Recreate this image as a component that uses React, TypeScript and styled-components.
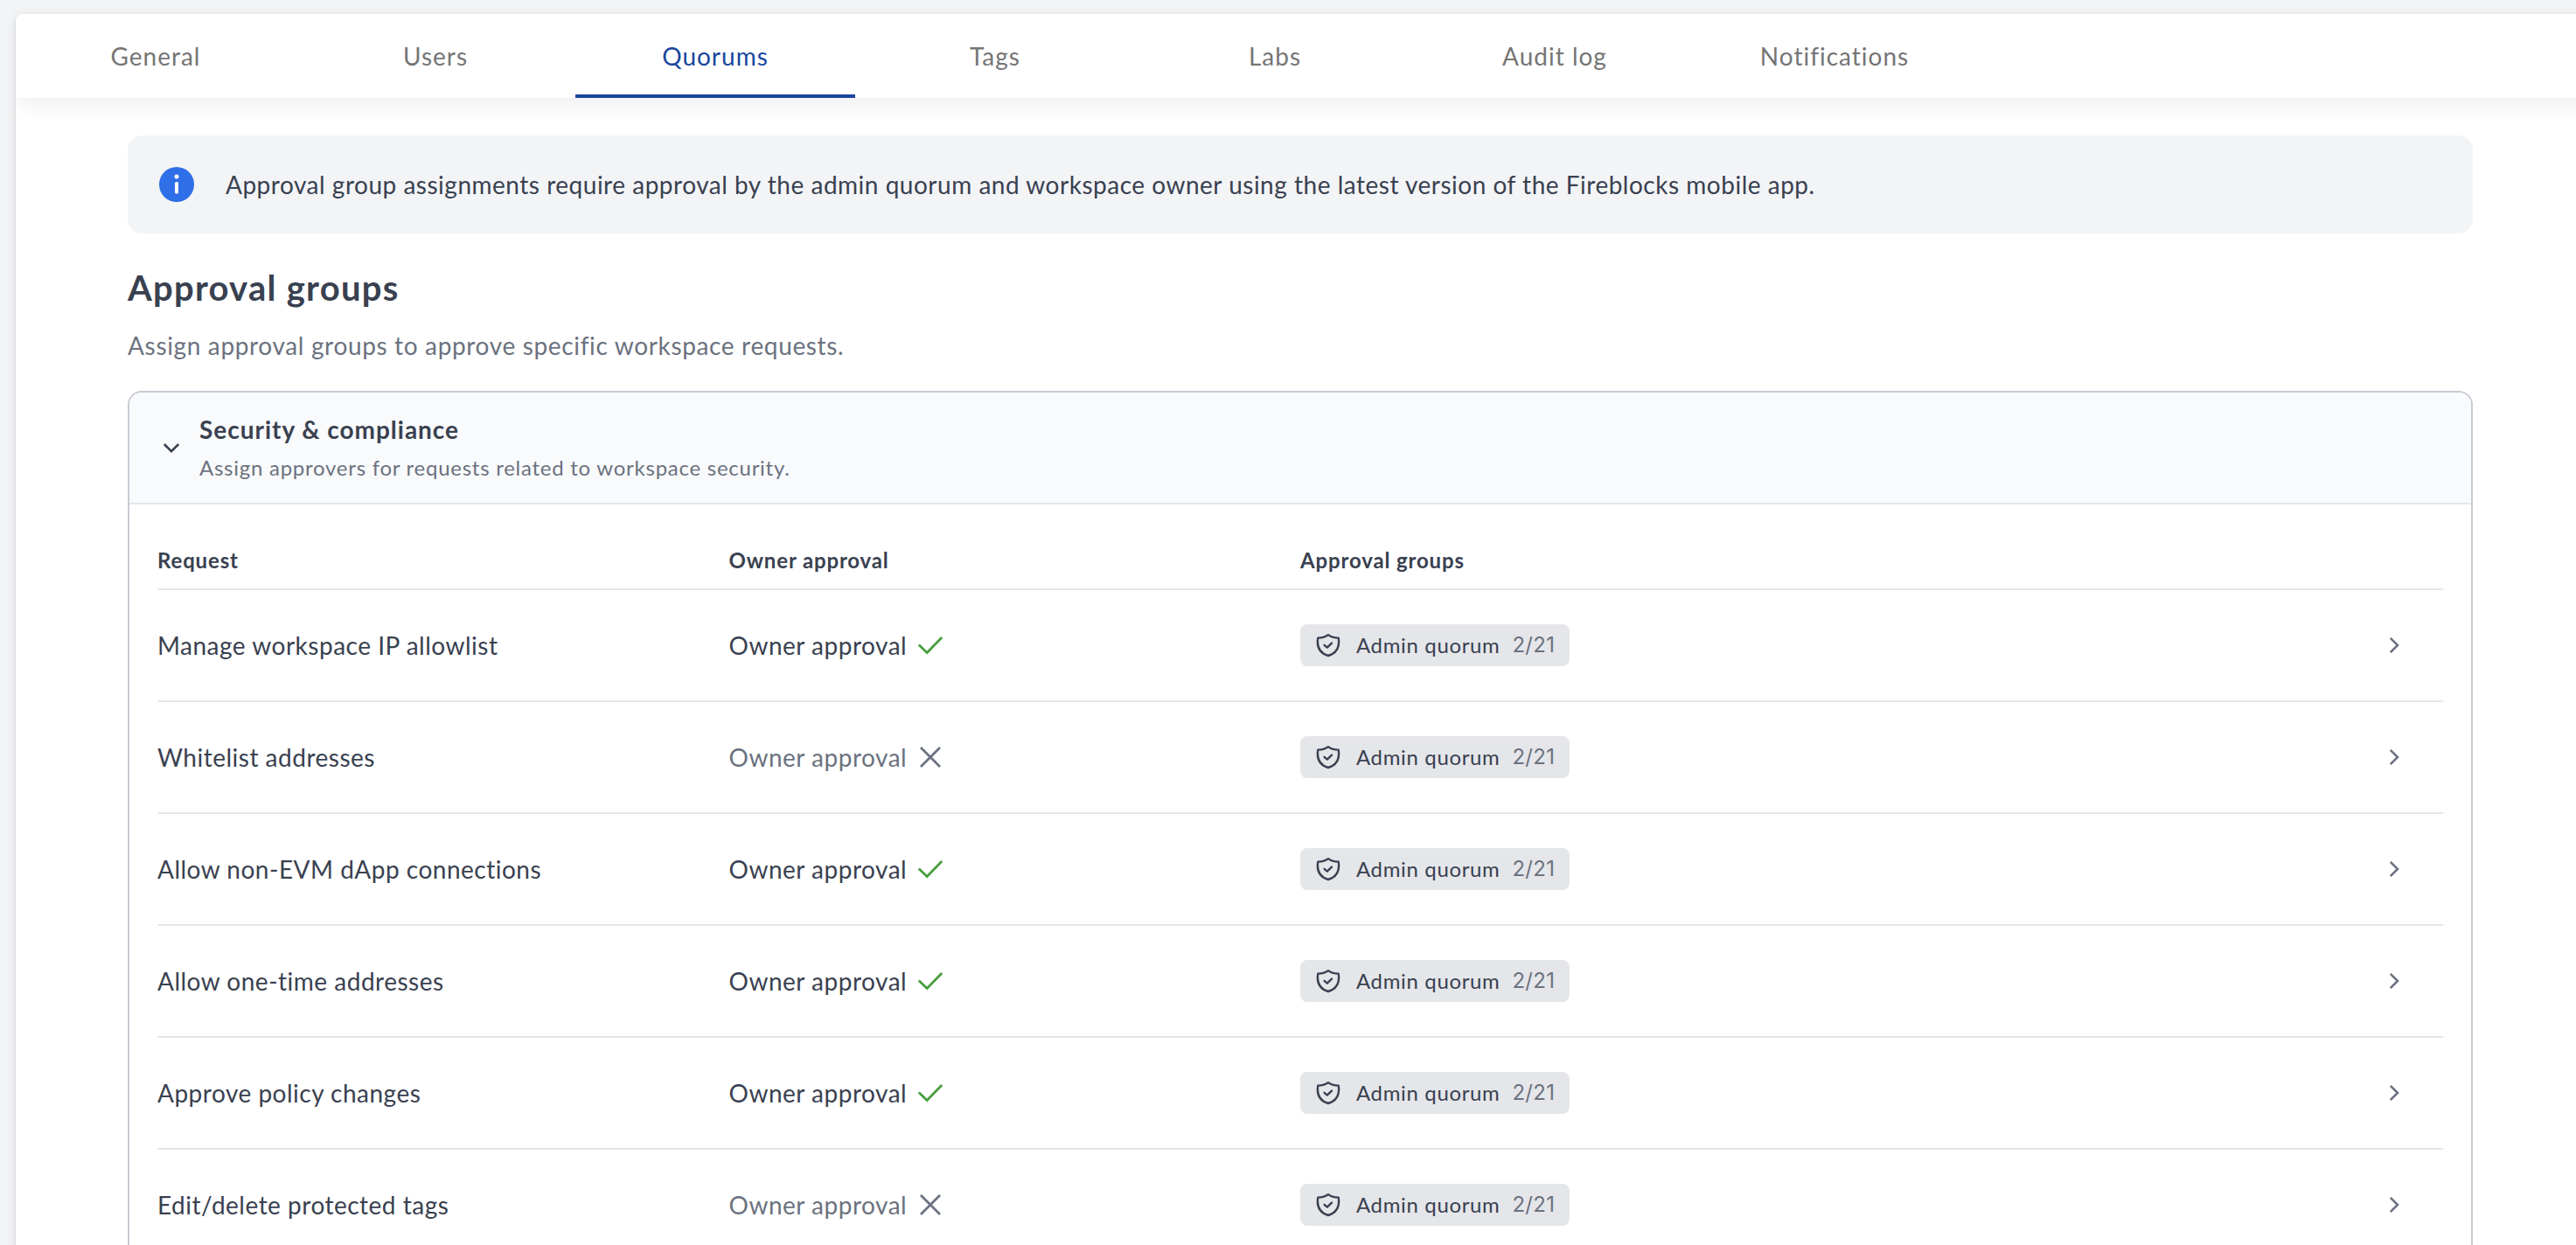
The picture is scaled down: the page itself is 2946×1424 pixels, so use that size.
import React from "react";
import styled, { createGlobalStyle } from "styled-components";

const GlobalStyle = createGlobalStyle`
  * {
    box-sizing: border-box;
  }

  body {
    margin: 0;
    height: 100vh;
    overflow: hidden;
    background-color: #f3f4f6;
    color: #394150;
    font-family: Lato, "Liberation Sans", sans-serif;
    font-size: 28px;
  }
`;

const Page = styled.div`
  height: 100vh;
  padding: 16px 0 0 18px;
  overflow: hidden;
`;

const Panel = styled.main`
  height: 1500px;
  margin-right: -40px;
  background-color: white;
  border-radius: 8px 0 0 0;
  box-shadow: 0 2px 12px rgba(0, 0, 0, 0.1), 0 1px 3px rgba(0, 0, 0, 0.1);
  overflow: hidden;
`;

const TabBar = styled.nav`
  display: flex;
  height: 96px;
  background-color: white;
  box-shadow: 0 8px 24px rgba(0, 0, 0, 0.065);
`;

const Tab = styled.button<{ $active: boolean }>`
  width: 320px;
  padding: 4px 0 0;
  border: none;
  border-bottom: 4px solid ${({ $active }) => ($active ? "#19469d" : "transparent")};
  background: none;
  color: ${({ $active }) => ($active ? "#19469d" : "#757575")};
  font-family: inherit;
  font-size: 28px;
  letter-spacing: 1px;
  cursor: pointer;
`;

const Content = styled.div`
  padding: 43px 158px 0 128px;
`;

const Banner = styled.div`
  display: flex;
  align-items: center;
  gap: 36px;
  height: 112px;
  padding: 0 36px;
  border-radius: 16px;
  background-color: #f3f4f6;
  letter-spacing: 0.51px;
`;

const Title = styled.h1`
  margin: 38px 0 0;
  font-size: 40px;
  line-height: 48px;
  letter-spacing: 1.25px;
`;

const Subtitle = styled.p`
  margin: 22px 0 32px;
  color: #6b7280;
  line-height: 40px;
  letter-spacing: 0.65px;
`;

const Card = styled.section`
  border: 2px solid #c9cbd3;
  border-radius: 16px;
  overflow: hidden;
`;

const CardHeader = styled.header`
  display: flex;
  align-items: center;
  gap: 16px;
  height: 128px;
  padding: 0 32px;
  border-bottom: 2px solid #e5e6ea;
  background-color: #f9fafc;
`;

const CardHeading = styled.div`
  padding-top: 2px;
`;

const CardTitle = styled.h2`
  margin: 0 0 4px;
  font-size: 28px;
  line-height: 40px;
  letter-spacing: 0.98px;
`;

const CardText = styled.p`
  margin: 0;
  color: #6b7280;
  font-size: 24px;
  line-height: 40px;
  letter-spacing: 0.74px;
`;

const Table = styled.div`
  padding: 30px 32px 0;
`;

const Row = styled.div`
  display: grid;
  grid-template-columns: repeat(4, 1fr);
  align-items: center;
  height: 128px;
  border-bottom: 2px solid #e5e6ea;
  letter-spacing: 0.5px;
`;

const HeadRow = styled(Row)`
  height: 68px;
  font-size: 24px;
  font-weight: 700;
  letter-spacing: 0.85px;
`;

const Owner = styled.div<{ $required: boolean }>`
  display: flex;
  align-items: center;
  gap: 7px;
  color: ${({ $required }) => ($required ? "#394150" : "#6b7280")};
`;

const Chip = styled.div`
  display: flex;
  align-items: center;
  justify-self: start;
  width: 308px;
  height: 48px;
  padding-left: 16px;
  border-radius: 8px;
  background-color: #e5e6ea;
  font-size: 24px;
  letter-spacing: 0.64px;
`;

const ChipName = styled.span`
  margin-left: 16px;
  padding-bottom: 2px;
`;

const ChipCount = styled.span`
  margin-left: 14px;
  padding-bottom: 2px;
  color: #6b7280;
  font-family: Inter, sans-serif;
  letter-spacing: 0.3px;
`;

const OpenButton = styled.button`
  display: flex;
  justify-self: end;
  margin-right: 40px;
  padding: 0;
  border: none;
  background: none;
  cursor: pointer;
`;

const InfoIcon = () => (
  <svg width="40" height="40" viewBox="0 0 40 40">
    <circle cx="20" cy="20" r="20" fill="#2f6fe8" />
    <circle cx="20" cy="11" r="2.5" fill="white" />
    <rect x="18" y="17" width="4" height="13.5" rx="1.6" fill="white" />
  </svg>
);

const ChevronDown = () => (
  <svg width="32" height="32" viewBox="0 0 32 32" fill="none">
    <path d="M7.8 12l8.2 8.2 8.2-8.2" stroke="#394150" strokeWidth="2.6" />
  </svg>
);

const ChevronRight = () => (
  <svg width="32" height="32" viewBox="0 0 32 32" fill="none">
    <path d="M11.8 7.8l8.2 8.2-8.2 8.2" stroke="#6b7280" strokeWidth="2.6" />
  </svg>
);

const CheckIcon = () => (
  <svg width="40" height="40" viewBox="0 0 40 40" fill="none">
    <path d="M6.8 19.5l9.4 9 17-17.5" stroke="#489f3f" strokeWidth="2.8" />
  </svg>
);

const CrossIcon = () => (
  <svg width="40" height="40" viewBox="0 0 40 40" fill="none">
    <path d="M9 9l22 22M31 9L9 31" stroke="#6b7280" strokeWidth="2.8" />
  </svg>
);

const ShieldIcon = () => (
  <svg
    width="32"
    height="32"
    viewBox="0 0 32 32"
    fill="none"
    stroke="#394150"
    strokeWidth="2.4"
    strokeLinecap="round"
    strokeLinejoin="round"
  >
    <path d="M16 4.2C13 6.8 9 7.6 4.3 7.6c-1.6 9.4 1.7 17.2 11.7 20.4 10-3.2 13.3-11 11.7-20.4C23 7.6 19 6.8 16 4.2z" />
    <path d="M11.6 15.8l3.2 2.8 5.2-5" />
  </svg>
);

const tabs = ["General", "Users", "Quorums", "Tags", "Labs", "Audit log", "Notifications"];

interface Request {
  name: string;
  ownerApproval: boolean;
}

const requests: Request[] = [
  { name: "Manage workspace IP allowlist", ownerApproval: true },
  { name: "Whitelist addresses", ownerApproval: false },
  { name: "Allow non-EVM dApp connections", ownerApproval: true },
  { name: "Allow one-time addresses", ownerApproval: true },
  { name: "Approve policy changes", ownerApproval: true },
  { name: "Edit/delete protected tags", ownerApproval: false },
];

interface RequestRowProps {
  data: Request;
}

const RequestRow: React.FC<RequestRowProps> = ({ data }) => {
  const { name, ownerApproval } = data;
  return (
    <Row>
      <span>{name}</span>
      <Owner $required={ownerApproval}>
        Owner approval
        {ownerApproval ? <CheckIcon /> : <CrossIcon />}
      </Owner>
      <Chip>
        <ShieldIcon />
        <ChipName>Admin quorum</ChipName>
        <ChipCount>2/21</ChipCount>
      </Chip>
      <OpenButton type="button">
        <ChevronRight />
      </OpenButton>
    </Row>
  );
};

const App: React.FC = () => {
  return (
    <Page>
      <GlobalStyle />
      <Panel>
        <TabBar>
          {tabs.map((tab) => (
            <Tab key={tab} type="button" $active={tab === "Quorums"}>
              {tab}
            </Tab>
          ))}
        </TabBar>
        <Content>
          <Banner>
            <InfoIcon />
            Approval group assignments require approval by the admin quorum and workspace owner
            using the latest version of the Fireblocks mobile app.
          </Banner>
          <Title>Approval groups</Title>
          <Subtitle>Assign approval groups to approve specific workspace requests.</Subtitle>
          <Card>
            <CardHeader>
              <ChevronDown />
              <CardHeading>
                <CardTitle>Security &amp; compliance</CardTitle>
                <CardText>Assign approvers for requests related to workspace security.</CardText>
              </CardHeading>
            </CardHeader>
            <Table>
              <HeadRow>
                <span>Request</span>
                <span>Owner approval</span>
                <span>Approval groups</span>
              </HeadRow>
              {requests.map((request) => (
                <RequestRow key={request.name} data={request} />
              ))}
            </Table>
          </Card>
        </Content>
      </Panel>
    </Page>
  );
};

export default App;
